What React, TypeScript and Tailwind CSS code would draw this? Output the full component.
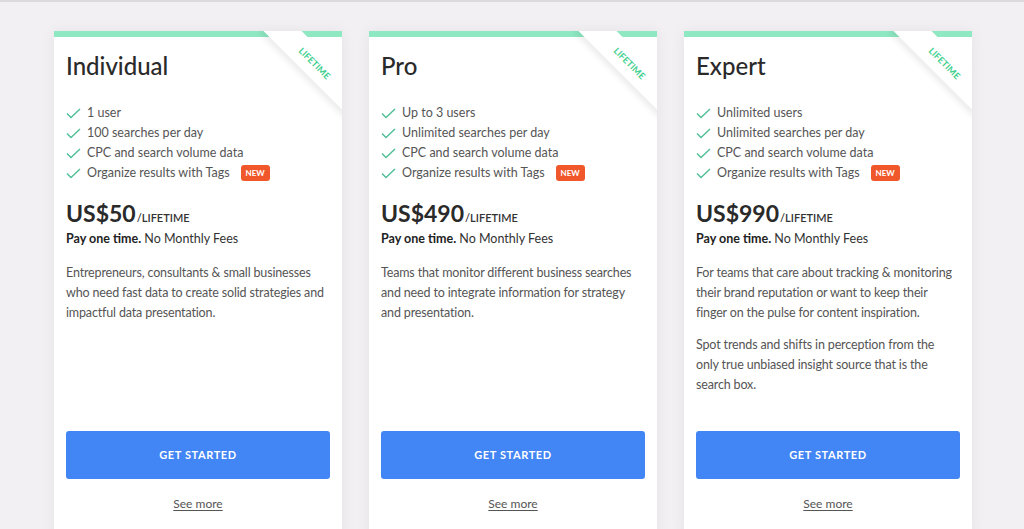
import React from "react";

type Plan = {
  name: string;
  features: string[];
  price: string;
  desc: string[];
};

const plans: Plan[] = [
  {
    name: "Individual",
    features: ["1 user", "100 searches per day", "CPC and search volume data", "Organize results with Tags"],
    price: "US$50",
    desc: ["Entrepreneurs, consultants & small businesses who need fast data to create solid strategies and impactful data presentation."],
  },
  {
    name: "Pro",
    features: ["Up to 3 users", "Unlimited searches per day", "CPC and search volume data", "Organize results with Tags"],
    price: "US$490",
    desc: ["Teams that monitor different business searches and need to integrate information for strategy and presentation."],
  },
  {
    name: "Expert",
    features: ["Unlimited users", "Unlimited searches per day", "CPC and search volume data", "Organize results with Tags"],
    price: "US$990",
    desc: [
      "For teams that care about tracking & monitoring their brand reputation or want to keep their finger on the pulse for content inspiration.",
      "Spot trends and shifts in perception from the only true unbiased insight source that is the search box.",
    ],
  },
];

function Check() {
  return (
    <svg width="15" height="11" viewBox="0 0 15 11" fill="none" className="shrink-0">
      <polyline points="1,5.5 5,9.5 14,1" stroke="#4fbf95" strokeWidth="1.4" fill="none" />
    </svg>
  );
}

function Card({ plan }: { plan: Plan }) {
  return (
    <div className="relative w-[288px] h-[509px] bg-white flex flex-col overflow-hidden shadow-[0_0_14px_rgba(0,0,0,0.06)]">
      <div className="h-[6px] bg-[#8ee8c2] shrink-0" />
      <div className="absolute right-[-32px] top-[18px] w-[120px] h-[27px] rotate-45 bg-white flex items-center justify-center shadow-[0_4px_6px_rgba(0,0,0,0.08)]">
        <span className="text-[9px] font-bold tracking-[0.1px] text-[#3ecf8e] ml-[2px]">LIFETIME</span>
      </div>
      <div className="px-[12px] flex flex-col flex-1">
        <h2 className="mt-[13px] text-[24px] leading-[32px] font-medium text-[#2a2a2a]">{plan.name}</h2>
        <ul className="mt-[21px] flex flex-col">
          {plan.features.map((f, i) => (
            <li key={i} className="flex items-center h-[20px] text-[12.5px] text-[#555]">
              <Check />
              <span className="ml-[6px]">{f}</span>
              {i === 3 && (
                <span className="ml-[11px] h-[16px] px-[5px] rounded-[3px] bg-[#f0582b] text-white text-[8px] font-bold flex items-center">
                  NEW
                </span>
              )}
            </li>
          ))}
        </ul>
        <div className="mt-[17px] flex items-baseline text-[#2a2a2a] leading-[26px]">
          <span className="text-[23px] font-bold">{plan.price}</span>
          <span className="text-[11px] font-semibold ml-[1px] text-[#333]">/LIFETIME</span>
        </div>
        <p className="text-[12.5px] leading-[20px] text-[#333] mt-[-2px]">
          <span className="font-bold text-[#222]">Pay one time.</span> No Monthly Fees
        </p>
        <div className="mt-[14px] pr-[5px] flex flex-col gap-[12px]">
          {plan.desc.map((d, i) => (
            <p key={i} className="text-[12.5px] leading-[20px] tracking-[-0.15px] text-[#555]">{d}</p>
          ))}
        </div>
        <div className="flex-1" />
        <button className="h-[48px] w-full rounded-[3px] bg-[#4285f4] text-white text-[11px] font-bold tracking-[0.6px]">
          GET STARTED
        </button>
        <a className="mt-[15px] self-center text-[12px] leading-[20px] text-[#555] underline underline-offset-2">See more</a>
        <div className="h-[26px] shrink-0" />
      </div>
    </div>
  );
}

export default function App() {
  return (
    <div
      className="w-[1024px] h-[529px] overflow-hidden bg-[#f2f0f3] border-t-2 border-[#dcdadd]"
      style={{ fontFamily: "Lato, 'Open Sans', sans-serif" }}
    >
      <div className="flex gap-[27px] pl-[54px] pt-[29px]">
        {plans.map((p) => (
          <Card key={p.name} plan={p} />
        ))}
      </div>
    </div>
  );
}
